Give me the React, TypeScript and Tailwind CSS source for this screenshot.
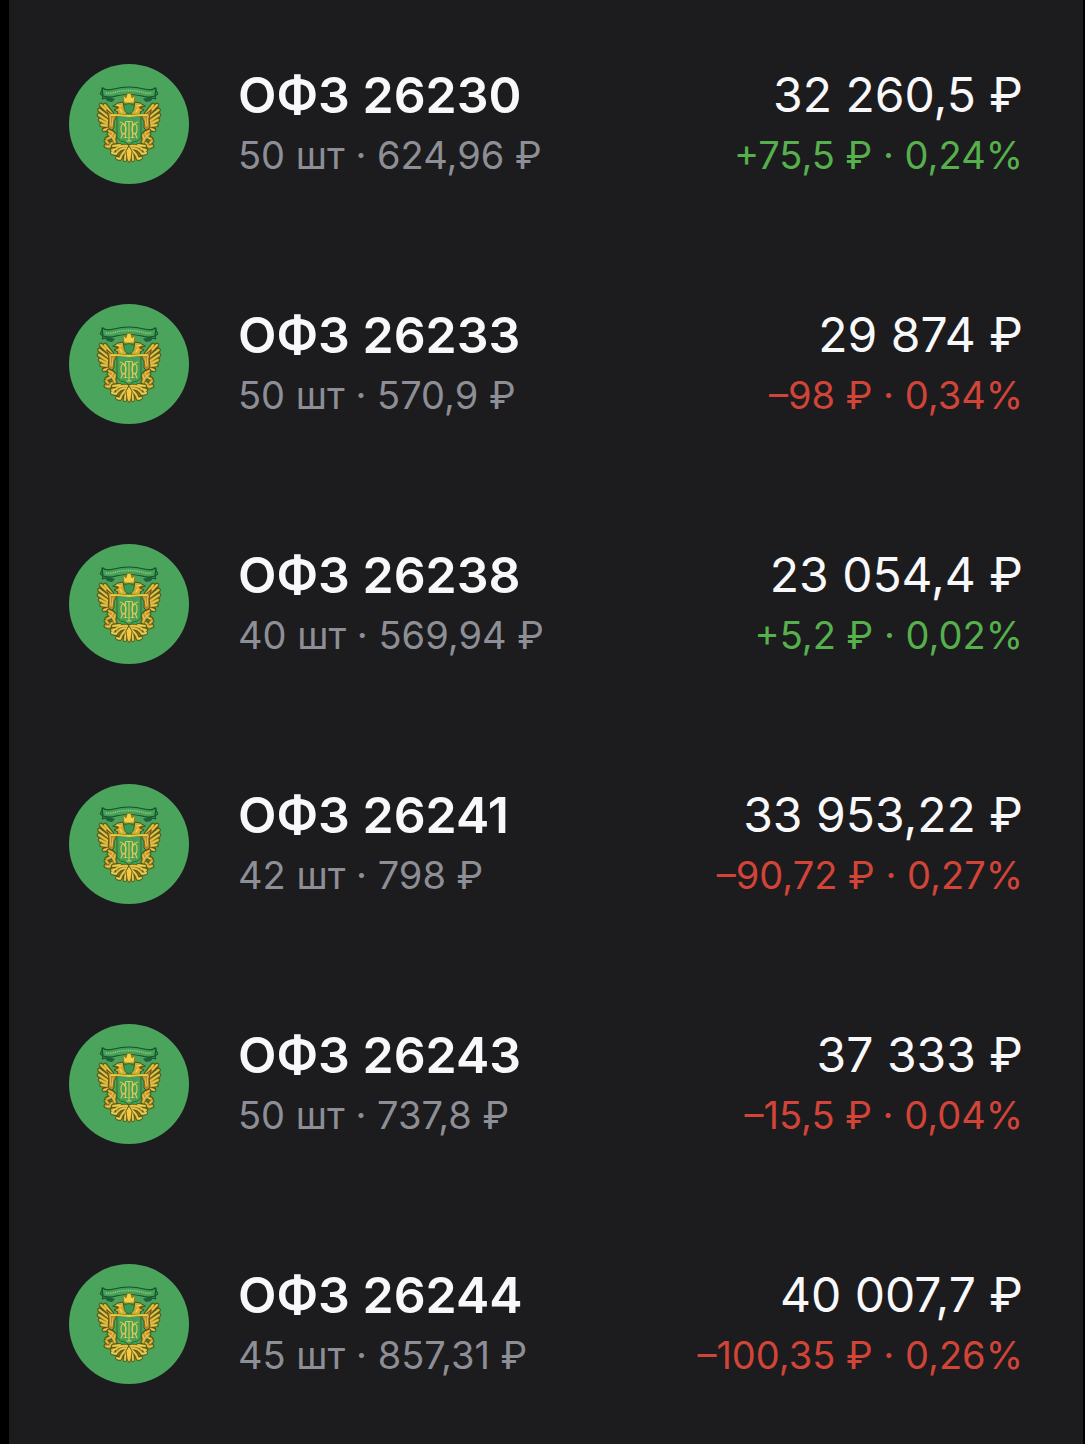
type Bond = {
  name: string;
  amount: string;
  price: string;
  total: string;
  change: string;
  percent: string;
  isUp: boolean;
};

const bonds: Bond[] = [
  { name: "ОФЗ 26230", amount: "50 шт", price: "624,96 ₽", total: "32 260,5 ₽", change: "+75,5 ₽", percent: "0,24%", isUp: true },
  { name: "ОФЗ 26233", amount: "50 шт", price: "570,9 ₽", total: "29 874 ₽", change: "–98 ₽", percent: "0,34%", isUp: false },
  { name: "ОФЗ 26238", amount: "40 шт", price: "569,94 ₽", total: "23 054,4 ₽", change: "+5,2 ₽", percent: "0,02%", isUp: true },
  { name: "ОФЗ 26241", amount: "42 шт", price: "798 ₽", total: "33 953,22 ₽", change: "–90,72 ₽", percent: "0,27%", isUp: false },
  { name: "ОФЗ 26243", amount: "50 шт", price: "737,8 ₽", total: "37 333 ₽", change: "–15,5 ₽", percent: "0,04%", isUp: false },
  { name: "ОФЗ 26244", amount: "45 шт", price: "857,31 ₽", total: "40 007,7 ₽", change: "–100,35 ₽", percent: "0,26%", isUp: false },
];

const feathers = "M32 41l8 8M30.5 46l9 7M30 51l9 6M31 56l8 4M32.5 61l8 1M35 66l6-2M36 41l7 9";
const supporter = "M40 67l4 2-2 4-4 2M40 70l4 4 2 4M43 79l-3 4-3-1M37 77l2 2M46 71l-1 4M46 81l1 2";
const plumes = "M59 82q-8-1-12 3l-4 1M58 84q-8 0-11 6l-4-1M59 85q-6 3-8 10l-3-1M60 85q-4 4-4 11M51 81l-7 1M45 86l-2 3";

// Left half of the eagle, reused mirrored for the right half
function EmblemHalf() {
  return (
    <g fill="none" strokeLinejoin="round" strokeLinecap="round">
      {/* ribbon tail */}
      <path d="M34 24l-3 6 3 2-1 3 5-1v-4z" fill="#2f8a4c" stroke="#17502c" strokeWidth="1" />
      <path d="M36 34l5-1 5 2-3 3-5-1z" fill="#1b6338" />

      {/* wing */}
      <path d={feathers} stroke="#3f5419" strokeWidth="4.6" />
      <path d={feathers} stroke="#d0a52f" strokeWidth="2.8" />
      <path d={feathers} stroke="#f0d35a" strokeWidth="0.9" />
      <path d="M38 46l5 4 4 1v3l-2 3v7l-3 3-3-4 1-8z" fill="#b58a28" stroke="#4f4a17" strokeWidth="0.9" />
      <path d="M41 52l1 10M44 54l-1 8" stroke="#e9c64b" strokeWidth="1" />

      {/* head and neck */}
      <path d="M44 42l5-3 5-1 1 4 1 4 3 3-3 2-8-1 1-2-4-2 4-2z" fill="#d6ab30" stroke="#3f5419" strokeWidth="1" />
      <path d="M48 41l4 1M51 45l2 3" stroke="#f4dc6b" strokeWidth="1.2" />
      <path d="M46 42l3 1" stroke="#4f4a17" strokeWidth="0.8" />

      {/* supporter beside the shield */}
      <path d={supporter} stroke="#3f5419" strokeWidth="4.8" />
      <path d={supporter} stroke="#c69a2d" strokeWidth="3" />
      <path d={supporter} stroke="#ecd05a" strokeWidth="0.9" />

      {/* tail plumes */}
      <path d="M60 81l-11 3-3 7 6 4 8 2z" fill="#8a7022" />
      <path d={plumes} stroke="#3f5419" strokeWidth="4" />
      <path d={plumes} stroke="#d0a52f" strokeWidth="2.6" />
      <path d={plumes} stroke="#f0d861" strokeWidth="1" />
    </g>
  );
}

function Emblem() {
  return (
    <svg viewBox="0 0 120 120" className="size-[120px] shrink-0" aria-hidden="true">
      <circle cx="60" cy="60" r="60" fill="#4aa45c" />
      <EmblemHalf />
      <g transform="translate(120 0) scale(-1 1)">
        <EmblemHalf />
      </g>

      {/* ribbon */}
      <path
        d="M33 24q5 3 12 1 15-4 30 0 7 2 12-1l-1 8q-7 2-13 0-13-3-26 0-6 2-13 0z"
        fill="#43a05a"
        stroke="#17502c"
        strokeWidth="1.2"
        strokeLinejoin="round"
      />
      <path d="M37 29q5 1 10-1 13-3 26 0 5 2 10 1" fill="none" stroke="#a3c66b" strokeWidth="1.4" strokeDasharray="1.3 0.9" />

      {/* crown and small shield between the heads */}
      <path d="M55 41q5-3 10 0v4q-1 4-5 5-4-1-5-5z" fill="#3c9a52" stroke="#2a6b2f" strokeWidth="0.8" />
      <path d="M54 31l3 3 1-4 2-1 2 1 1 4 3-3-1 8H55z" fill="#f2cf45" stroke="#8a6a1a" strokeWidth="0.8" strokeLinejoin="round" />

      {/* main shield */}
      <path d="M48 52h24v22q-3 4-8 4l-4 3-4-3q-5 0-8-4z" fill="#46a058" stroke="#2f6a2c" strokeWidth="1" />
      <path d="M42 51q9 0 18 1 9-1 18-1" fill="none" stroke="#ecc843" strokeWidth="2" strokeLinecap="round" />

      {/* monogram */}
      <g fill="none" stroke="#dccb50" strokeWidth="1.2" strokeLinecap="round">
        <path d="M60 58v19M57 57.5h6M58 77h4" />
        <path d="M56.5 58v15M63.5 58v15M55 73.5h3M62 73.5h3" />
        <ellipse cx="54.5" cy="65" rx="2.5" ry="5" />
        <ellipse cx="65.5" cy="65" rx="2.5" ry="5" />
        <path d="M51 58q4 1 5 4M69 58q-4 1-5 4M54 69l-2 5M66 69l2 5" />
      </g>

      {/* centre plume */}
      <path d="M60 82l3 5-1 8-2 4-2-4-1-8z" fill="#efcb45" stroke="#5d4a15" strokeWidth="0.8" />
    </svg>
  );
}

function BondRow({ bond }: { bond: Bond }) {
  return (
    <li className="flex items-center">
      <Emblem />
      <div className="ml-[49px] min-w-0 flex-1 whitespace-nowrap">
        <h2 className="text-[50px] leading-[62px] font-semibold text-[#f8f8fa]">{bond.name}</h2>
        <p className="text-[38px] leading-[58px] text-[#8e8f96]">
          {bond.amount} · {bond.price}
        </p>
      </div>
      <div className="shrink-0 text-right whitespace-nowrap">
        <p className="text-[48px] leading-[62px] text-[#f8f8fa]">{bond.total}</p>
        <p className={`text-[38px] leading-[58px] ${bond.isUp ? "text-[#56b04c]" : "text-[#d24438]"}`}>
          {bond.change} · {bond.percent}
        </p>
      </div>
    </li>
  );
}

export default function App() {
  return (
    <main className="min-h-screen border-r-2 border-l-[9px] border-black bg-[#1c1c1e] font-['Inter',sans-serif]">
      <ul className="flex flex-col gap-[120px] pt-16 pr-[60px] pb-[60px] pl-[60px]">
        {bonds.map((bond) => (
          <BondRow key={bond.name} bond={bond} />
        ))}
      </ul>
    </main>
  );
}
